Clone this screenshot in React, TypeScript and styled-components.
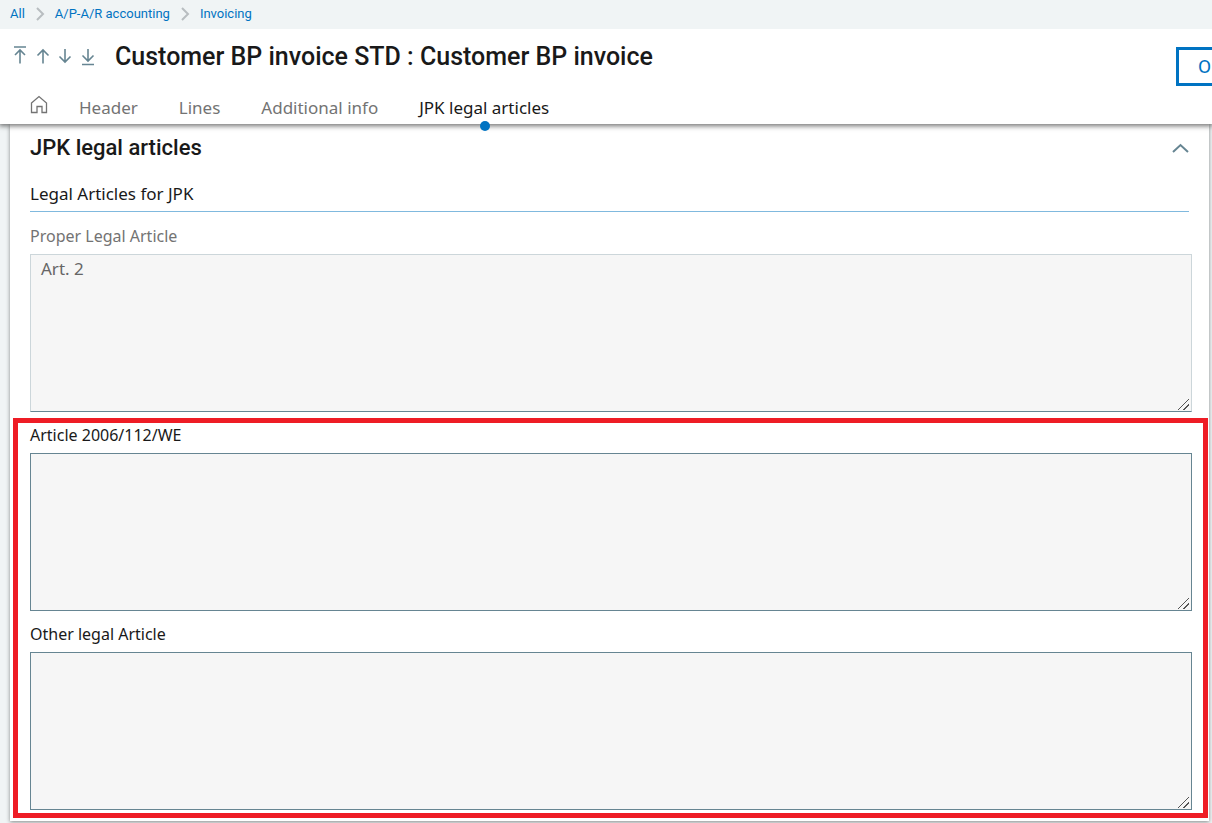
import React from "react";
import styled, { createGlobalStyle } from "styled-components";

const heading = `Roboto, "Liberation Sans", sans-serif`;
const text = `"Noto Sans", "Open Sans", sans-serif`;

const GlobalStyle = createGlobalStyle`
  *, *::before, *::after { box-sizing: border-box; }
  body { margin: 0; background: #f0f4f5; color: #191919; font-family: ${text}; overflow-x: hidden; }
  h1, h2, h3, ol { margin: 0; padding: 0; }
  button { padding: 0; border: 0; background: none; color: inherit; cursor: pointer; }
  svg { display: block; }
`;

const Page = styled.div`
  display: flex;
  flex-direction: column;
`;

const Breadcrumbs = styled.nav`
  position: relative;
  z-index: 2;
  height: 29px;
  padding: 0 10px;
  background: #f0f4f5;
  ol { display: flex; align-items: center; height: 27px; list-style: none; }
  li { display: flex; align-items: center; }
`;

const Crumb = styled.a`
  font: 400 13px/20px ${heading};
  color: #0073c2;
  text-decoration: none;
`;

const Separator = styled.svg`
  margin: 0 10px;
`;

const Header = styled.header`
  position: relative;
  z-index: 1;
  height: 95px;
  background: #fff;
  box-shadow: 0 1px 5px 1px rgba(0, 0, 0, 0.55);
  display: flex;
  flex-direction: column;
  justify-content: space-between;
`;

const TitleRow = styled.div`
  display: flex;
  align-items: center;
  height: 56px;
  padding-left: 12px;
`;

const RecordNav = styled.div`
  display: flex;
  gap: 7px;
  margin-right: 18px;
`;

const IconButton = styled.button`
  color: #668592;
`;

const Title = styled.h1`
  flex: 1;
  font: 500 25px/32px ${heading};
`;

const ActionButton = styled.button`
  && {
    width: 36px;
    height: 39px;
    margin-top: 18px;
    padding-left: 19px;
    border: 3px solid #0073c2;
    border-right: 0;
    color: #0073c2;
    font: 400 19px/34px ${heading};
    text-align: left;
  }
`;

const Tabs = styled.nav`
  display: flex;
  gap: 41px;
  height: 34px;
  padding-left: 30px;
`;

const Tab = styled.a<{ $active?: boolean }>`
  position: relative;
  font: 400 17px/36px ${text};
  color: ${(p) => (p.$active ? "#191919" : "#737373")};
  text-decoration: none;
  white-space: nowrap;
  &:first-child { margin-right: -10px; }
`;

const HomeIcon = styled.svg`
  margin-top: 5px;
`;

const ActiveDot = styled.span`
  position: absolute;
  left: calc(50% - 4px);
  bottom: -7px;
  width: 10px;
  height: 10px;
  border-radius: 50%;
  background: #0073c2;
`;

const Panel = styled.main`
  margin: 0 3px 2px 10px;
  padding: 5px 0 3px;
  background: #fff;
  box-shadow: 0 1px 4px rgba(0, 0, 0, 0.45);
`;

const SectionHead = styled.div`
  display: flex;
  align-items: center;
  justify-content: space-between;
  height: 37px;
  padding: 0 20px;
`;

const SectionTitle = styled.h2`
  font: 500 22px/32px ${heading};
`;

const GroupTitle = styled.h3`
  height: 46px;
  margin: 0 20px 12px;
  padding-top: 16px;
  border-bottom: 1px solid #80b9de;
  font: 400 17px/24px ${text};
`;

const Field = styled.div`
  display: flex;
  flex-direction: column;
  & + & { margin-top: 11px; }
`;

const Plain = styled.div`
  padding: 0 17px 0 20px;
`;

const Highlight = styled.section`
  margin: 6px 1px 0 3px;
  padding: 0 11px 3px 12px;
  border: 5px solid #ee1c25;
`;

const Label = styled.label<{ $muted?: boolean }>`
  height: 30px;
  font: 400 16px/24px ${text};
  color: ${(p) => (p.$muted ? "#737373" : "#191919")};
`;

const TextArea = styled.textarea`
  display: block;
  width: 100%;
  height: 158px;
  padding: 2px 10px;
  border: 1px solid #668592;
  border-radius: 0;
  outline: 0;
  background: #f6f6f6;
  color: #191919;
  font: 400 17px/24px ${text};
  resize: vertical;
  &::-webkit-resizer {
    background: linear-gradient(
        135deg,
        transparent 47%, #555 47%, #555 53%, transparent 53%,
        transparent 72%, #555 72%, #555 78%, transparent 78%
      ) 2px 3px / 11px 11px no-repeat;
  }
  &:read-only {
    border-color: #ccd6da #ccd6da #668592;
    color: #666;
  }
`;

const arrows = [
  { label: "First", d: "M2 1h12M8 17.500V4M3 9l5-5 5 5" },
  { label: "Previous", d: "M8 17.500V4M2.500 9.500 8 4l5.500 5.500" },
  { label: "Next", d: "M7 3v13M1.500 10.500l5.500 5.500 5.500-5.500" },
  { label: "Last", d: "M7 3v12M1.500 9.500 7 15l5.500-5.500M1 18.500h12" },
];

const crumbs = ["All", "A/P-A/R accounting", "Invoicing"];

function LegalField({ id, label, value, readOnly }: { id: string; label: string; value?: string; readOnly?: boolean }) {
  return (
    <Field>
      <Label htmlFor={id} $muted={readOnly}>{label}</Label>
      <TextArea id={id} defaultValue={value} readOnly={readOnly} />
    </Field>
  );
}

export default function App() {
  return (
    <Page>
      <GlobalStyle />
      <Breadcrumbs aria-label="Breadcrumb">
        <ol>
          {crumbs.map((c, i) => (
            <li key={c}>
              {i > 0 && (
                <Separator width="10" height="14" viewBox="0 0 10 14" fill="none" stroke="#b8bdc0" strokeWidth="2">
                  <path d="M2 1l6 6-6 6" />
                </Separator>
              )}
              <Crumb href="#">{c}</Crumb>
            </li>
          ))}
        </ol>
      </Breadcrumbs>
      <Header>
        <TitleRow>
          <RecordNav>
            {arrows.map((a) => (
              <IconButton key={a.label} type="button" aria-label={a.label}>
                <svg width="16" height="22" viewBox="0 0 16 22" fill="none" stroke="currentColor" strokeWidth="1.600">
                  <path d={a.d} />
                </svg>
              </IconButton>
            ))}
          </RecordNav>
          <Title>Customer BP invoice STD : Customer BP invoice</Title>
          <ActionButton type="button">O</ActionButton>
        </TitleRow>
        <Tabs aria-label="Sections">
          <Tab href="#home" aria-label="Home">
            <HomeIcon width="18" height="20" viewBox="0 0 18 20" fill="none" stroke="#737373" strokeWidth="1.300">
              <path d="M1.500 8 9 1.500l7.500 6.500V17.500h-4.500v-6H7v6H1.500z" />
            </HomeIcon>
          </Tab>
          <Tab href="#header">Header</Tab>
          <Tab href="#lines">Lines</Tab>
          <Tab href="#info">Additional info</Tab>
          <Tab href="#jpk" $active aria-current="true">
            JPK legal articles
            <ActiveDot />
          </Tab>
        </Tabs>
      </Header>
      <Panel>
        <SectionHead>
          <SectionTitle>JPK legal articles</SectionTitle>
          <IconButton type="button" aria-label="Collapse section">
            <svg width="17" height="10" viewBox="0 0 17 10" fill="none" stroke="currentColor" strokeWidth="2">
              <path d="M1 9l7.500-7L16 9" />
            </svg>
          </IconButton>
        </SectionHead>
        <GroupTitle>Legal Articles for JPK</GroupTitle>
        <Plain>
          <LegalField id="proper" label="Proper Legal Article" value="Art. 2" readOnly />
        </Plain>
        <Highlight>
          <LegalField id="article-we" label="Article 2006/112/WE" />
          <LegalField id="other" label="Other legal Article" />
        </Highlight>
      </Panel>
    </Page>
  );
}
